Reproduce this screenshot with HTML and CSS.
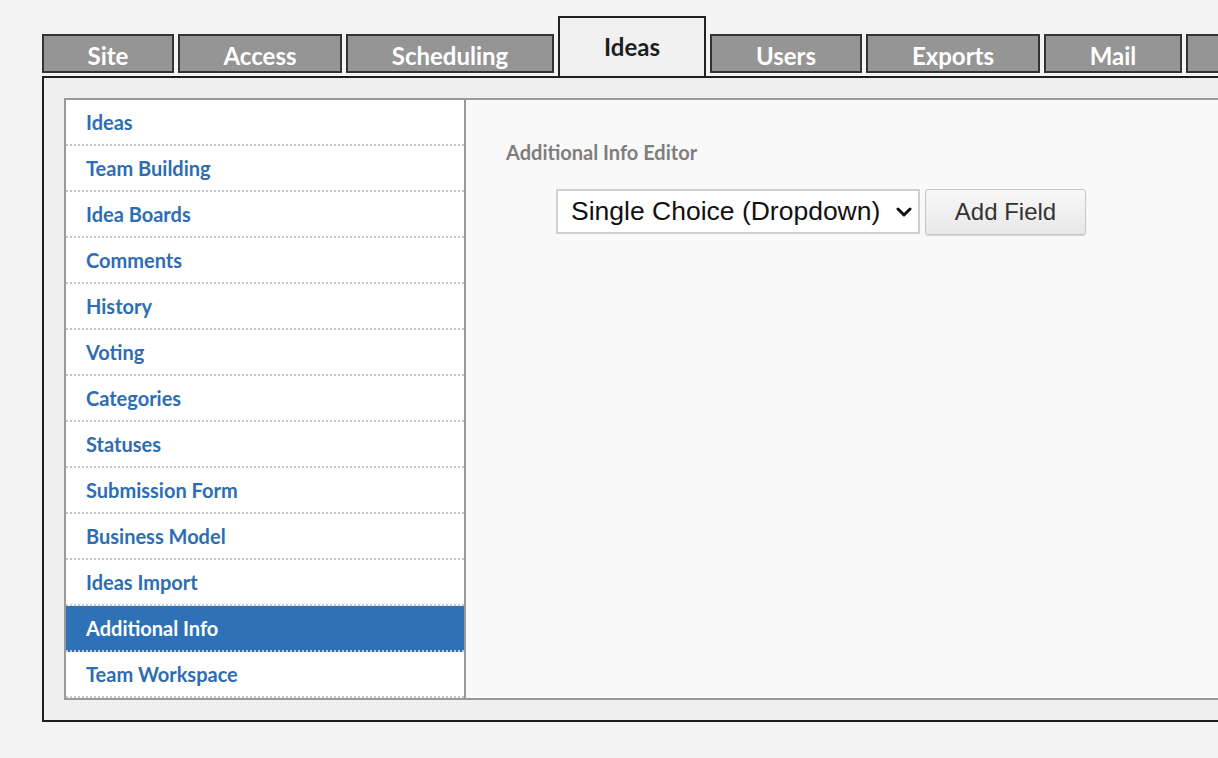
FILE: index.html
```html
<!DOCTYPE html>
<html>
<head>
<meta charset="utf-8">
<link rel="stylesheet" href="styles.css">
</head>
<body>
<div class="page">
  <nav class="tabs">
    <div class="tab w-site">Site</div>
    <div class="tab w-access">Access</div>
    <div class="tab w-sched">Scheduling</div>
    <div class="tab active w-ideas">Ideas</div>
    <div class="tab w-users">Users</div>
    <div class="tab w-exports">Exports</div>
    <div class="tab w-mail">Mail</div>
    <div class="tab w-more"></div>
  </nav>
  <div class="container">
    <div class="box">
      <ul class="side">
        <li>Ideas</li>
        <li>Team Building</li>
        <li>Idea Boards</li>
        <li>Comments</li>
        <li>History</li>
        <li>Voting</li>
        <li>Categories</li>
        <li>Statuses</li>
        <li>Submission Form</li>
        <li>Business Model</li>
        <li>Ideas Import</li>
        <li class="selected">Additional Info</li>
        <li>Team Workspace</li>
      </ul>
      <div class="main">
        <h2 class="heading">Additional Info Editor</h2>
        <div class="controls">
          <div class="select">
            <span>Single Choice (Dropdown)</span>
            <svg class="chev" width="16" height="12" viewBox="0 0 16 12"><path d="M2 3 L8 9 L14 3" fill="none" stroke="#111" stroke-width="3" stroke-linecap="round" stroke-linejoin="round"/></svg>
          </div>
          <button class="btn">Add Field</button>
        </div>
      </div>
    </div>
  </div>
</div>
</body>
</html>
```
FILE: styles.css
```css
html, body {
  margin: 0;
  padding: 0;
  background: #f3f3f3;
  overflow: hidden;
}
body {
  font-family: Lato, "Noto Sans", sans-serif;
}
.page {
  padding: 16px 0 0 42px;
  width: 1300px;
}
.tabs {
  display: flex;
  align-items: flex-end;
  gap: 4px;
  height: 60px;
}
.tab {
  box-sizing: border-box;
  height: 39px;
  margin-bottom: 3px;
  background: #959595;
  border: 2px solid #333;
  color: #fff;
  font-weight: 700;
  font-size: 24px;
  text-align: center;
  line-height: 39px;
}
.tab.active {
  height: 60px;
  margin-bottom: 0;
  background: #f0f0f0;
  border: 2px solid #222;
  border-bottom: none;
  color: #1e1e1e;
  line-height: 58px;
  padding-bottom: 4px;
}
.w-site { width: 132px; }
.w-access { width: 164px; }
.w-sched { width: 208px; }
.w-ideas { width: 148px; }
.w-users { width: 152px; }
.w-exports { width: 174px; }
.w-mail { width: 138px; }
.w-more { width: 100px; }
.container {
  width: 1240px;
  box-sizing: border-box;
  border: 2px solid #1e1e1e;
  background: #efefef;
  padding: 20px;
}
.box {
  display: flex;
  border: 2px solid #9a9a9a;
  background: #f9f9f9;
}
.side {
  list-style: none;
  margin: 0;
  padding: 0;
  width: 398px;
  background: #fff;
  border-right: 2px solid #9a9a9a;
}
.side li {
  height: 44px;
  line-height: 44px;
  border-bottom: 2px dotted #c8c8c8;
  padding-left: 20px;
  color: #2d6db3;
  font-weight: 700;
  font-size: 20px;
}
.side li.selected {
  background: #2e71b6;
  color: #fff;
}
.main {
  flex: 1;
  padding: 41px 0 0 40px;
}
.heading {
  margin: 0;
  font-size: 20px;
  font-weight: 700;
  color: #7e7e7e;
  line-height: 22px;
}
.controls {
  display: flex;
  gap: 5px;
  margin: 26px 0 0 50px;
}
.select {
  box-sizing: border-box;
  width: 364px;
  height: 45px;
  background: #fff;
  border: 2px solid #cfcfcf;
  display: flex;
  align-items: center;
  justify-content: space-between;
  padding: 0 6px 0 13px;
  font-family: "Liberation Sans", Arial, sans-serif;
  font-size: 26.5px;
  color: #111;
}
.chev {
  margin-top: 1px;
}
.btn {
  box-sizing: border-box;
  width: 161px;
  height: 46px;
  border: 1px solid #c6c6c6;
  border-radius: 3px;
  background: linear-gradient(#f8f8f8, #e7e7e7);
  box-shadow: 0 1px 1px rgba(0,0,0,0.15);
  font-family: "Liberation Sans", Arial, sans-serif;
  font-size: 24px;
  color: #333;
  padding: 0;
}
```
